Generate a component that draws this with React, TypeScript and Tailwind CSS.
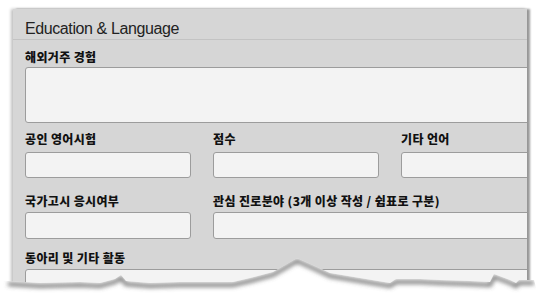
import React from 'react';

const tearPoints: [number, number][] = [
  [8, 281], [40, 283], [80, 282], [100, 283], [115, 279], [121, 275], [126, 281],
  [150, 283], [180, 282], [233, 282], [250, 278], [273, 272], [297, 258], [315, 266],
  [330, 273], [360, 278], [390, 283], [396, 279], [420, 279], [440, 280], [470, 281],
  [490, 282], [494, 274], [510, 280], [516, 283], [519, 280], [534, 280],
];

const Label: React.FC<{ children: React.ReactNode; className?: string }> = ({ children, className }) => (
  <div
    className={`h-4 leading-4 text-[12px] font-black tracking-[0.35px] text-[#111] whitespace-nowrap ${className ?? ''}`}
    style={{ fontFamily: '"Noto Sans CJK KR", "Liberation Sans", sans-serif' }}
  >
    {children}
  </div>
);

const Field: React.FC<{ className?: string }> = ({ className }) => (
  <div className={`bg-[#f3f3f3] border border-[#9c9c9c] rounded-[3px] ${className ?? ''}`} />
);

const TornEdge: React.FC = () => {
  const line = tearPoints.map(([x, y]) => `${x},${y}`).join(' ');
  const shadow = tearPoints.map(([x, y]) => `${x},${y + 3}`).join(' ');
  const poly = `${line} 540,302 0,302 0,${tearPoints[0][1]}`;
  return (
    <svg className="absolute inset-0 pointer-events-none" width="540" height="302" viewBox="0 0 540 302">
      <defs>
        <clipPath id="below">
          <polygon points={poly} />
        </clipPath>
        <filter id="blur" x="-10%" y="-50%" width="120%" height="200%">
          <feGaussianBlur stdDeviation="2.2" />
        </filter>
      </defs>
      <polygon points={poly} fill="#ffffff" />
      <g clipPath="url(#below)">
        <polyline points={shadow} fill="none" stroke="#555" strokeOpacity="0.75" strokeWidth="4" filter="url(#blur)" />
      </g>
    </svg>
  );
};

export default function App() {
  return (
    <div className="relative w-[540px] h-[302px] bg-white overflow-hidden">
      <div className="ml-[13px] mt-[9px] w-[514px] h-[290px] bg-[#d6d6d6] overflow-hidden shadow-[-2px_0_3px_rgba(0,0,0,0.25),3px_0_2px_rgba(0,0,0,0.4)]">
        <div className="px-[12px] pt-[10px] border-b border-[#c3c3c3]">
          <h1
            className="h-5 leading-5 text-[16px] text-[#222] tracking-[-0.4px]"
            style={{ fontFamily: '"Liberation Sans", Arial, sans-serif' }}
          >
            Education &amp; Language
          </h1>
        </div>
        <div className="pl-[12px] w-[566px]">
          <Label className="mt-[9px]">해외거주 경험</Label>
          <Field className="mt-[2px] h-[56px]" />

          <div className="grid grid-cols-[166px_166px_166px] gap-x-[22px] mt-[8px]">
            <Label>공인 영어시험</Label>
            <Label>점수</Label>
            <Label>기타 언어</Label>
            <Field className="mt-[5px] h-[26px]" />
            <Field className="mt-[5px] h-[26px]" />
            <Field className="mt-[5px] h-[26px]" />
          </div>

          <div className="grid grid-cols-[166px_354px] gap-x-[22px] mt-[15px]">
            <Label>국가고시 응시여부</Label>
            <Label>관심 진로분야 (3개 이상 작성 / 쉼표로 구분)</Label>
            <Field className="mt-[3px] h-[27px]" />
            <Field className="mt-[3px] h-[27px]" />
          </div>

          <Label className="mt-[11px]">동아리 및 기타 활동</Label>
          <Field className="mt-[3px] h-[30px]" />
        </div>
      </div>
      <TornEdge />
    </div>
  );
}
